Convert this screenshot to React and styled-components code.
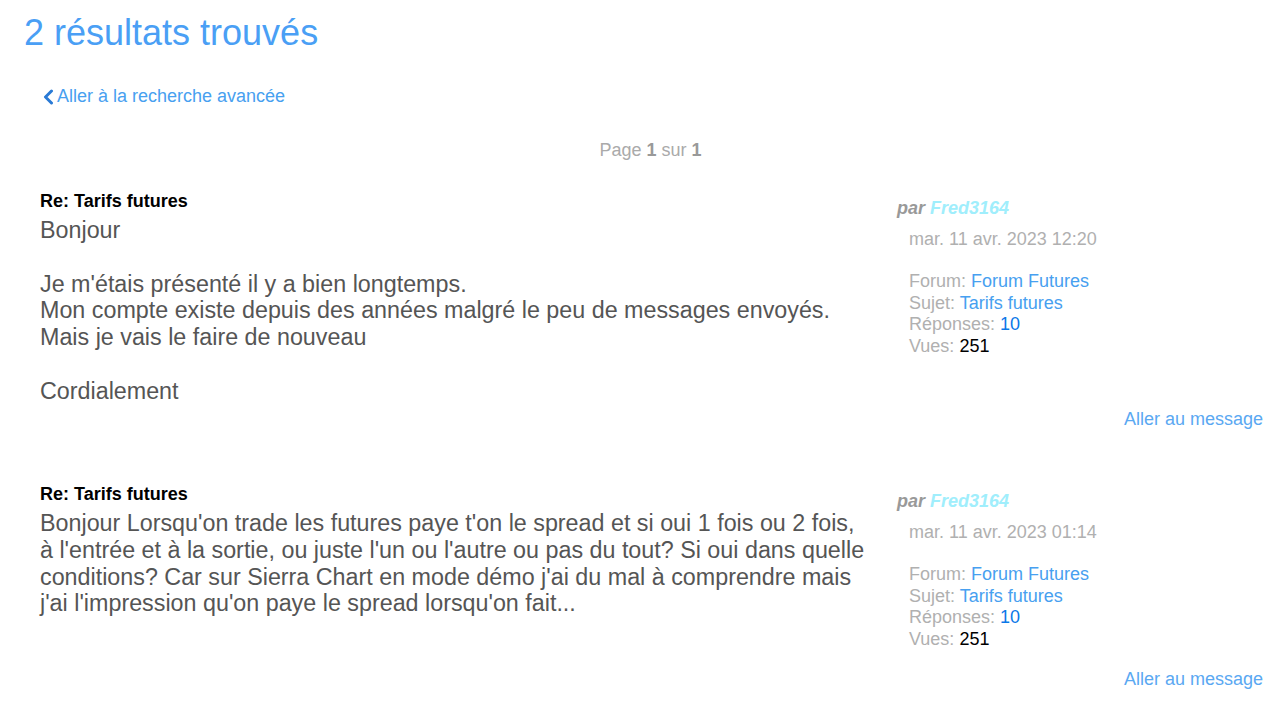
import React from 'react';
import styled, { createGlobalStyle } from 'styled-components';

const GlobalStyle = createGlobalStyle`
  body {
    margin: 0;
    background: #ffffff;
    font-family: "Liberation Sans", Arial, sans-serif;
    font-size: 18px;
  }
`;

const results = [
  {
    id: 1,
    title: 'Re: Tarifs futures',
    body: [
      'Bonjour',
      '',
      "Je m'étais présenté il y a bien longtemps.",
      'Mon compte existe depuis des années malgré le peu de messages envoyés.',
      'Mais je vais le faire de nouveau',
      '',
      'Cordialement',
    ],
    author: 'Fred3164',
    date: 'mar. 11 avr. 2023 12:20',
    forum: 'Forum Futures',
    topic: 'Tarifs futures',
    replies: 10,
    views: 251,
  },
  {
    id: 2,
    title: 'Re: Tarifs futures',
    body: [
      "Bonjour Lorsqu'on trade les futures paye t'on le spread et si oui 1 fois ou 2 fois, à l'entrée et à la sortie, ou juste l'un ou l'autre ou pas du tout? Si oui dans quelle conditions? Car sur Sierra Chart en mode démo j'ai du mal à comprendre mais j'ai l'impression qu'on paye le spread lorsqu'on fait...",
    ],
    author: 'Fred3164',
    date: 'mar. 11 avr. 2023 01:14',
    forum: 'Forum Futures',
    topic: 'Tarifs futures',
    replies: 10,
    views: 251,
  },
];

const App = () => (
  <Page>
    <GlobalStyle />
    <Title>2 résultats trouvés</Title>
    <BackLink href="#">
      <Chevron viewBox="0 0 12 16" aria-hidden="true">
        <path d="M9.5 2 L3.5 8 L9.5 14" />
      </Chevron>
      Aller à la recherche avancée
    </BackLink>
    <Pagination>
      Page <strong>1</strong> sur <strong>1</strong>
    </Pagination>
    {results.map((post) => (
      <Post key={post.id}>
        <PostRow>
          <PostMain>
            <PostTitle>{post.title}</PostTitle>
            <PostBody>
              {post.body.map((line, i) => (
                <BodyLine key={i}>{line || '\u00a0'}</BodyLine>
              ))}
            </PostBody>
          </PostMain>
          <PostMeta>
            <Author>
              par <AuthorName>{post.author}</AuthorName>
            </Author>
            <MetaList>
              <MetaLine>{post.date}</MetaLine>
              <MetaLine>{'\u00a0'}</MetaLine>
              <MetaLine>Forum: <MetaLink href="#">{post.forum}</MetaLink></MetaLine>
              <MetaLine>Sujet: <MetaLink href="#">{post.topic}</MetaLink></MetaLine>
              <MetaLine>Réponses: <Replies>{post.replies}</Replies></MetaLine>
              <MetaLine>Vues: <Views>{post.views}</Views></MetaLine>
            </MetaList>
          </PostMeta>
        </PostRow>
        <PostFooter>
          <JumpLink href="#">Aller au message</JumpLink>
        </PostFooter>
      </Post>
    ))}
  </Page>
);

const Page = styled('div')`
  padding: 13px 15px 0 24px;
`;

const Title = styled('h1')`
  margin: 0;
  font-size: 36px;
  font-weight: normal;
  line-height: 40px;
  color: #4a9ff5;
`;

const BackLink = styled('a')`
  display: inline-flex;
  align-items: center;
  gap: 3px;
  margin: 33px 0 0 18px;
  line-height: 21px;
  color: #47a0f0;
  text-decoration: none;
`;

const Chevron = styled('svg')`
  width: 12px;
  height: 16px;
  fill: none;
  stroke: #2a7ad5;
  stroke-width: 3;
  stroke-linecap: round;
  stroke-linejoin: round;
`;

const Pagination = styled('div')`
  margin-top: 30px;
  padding-left: 14px;
  text-align: center;
  line-height: 21px;
  color: #aaaaaa;

  strong {
    color: #999999;
  }
`;

const Post = styled('div')`
  margin-top: 30px;
  padding-left: 16px;

  & + & {
    margin-top: 54px;
  }
`;

const PostRow = styled('div')`
  display: flex;
`;

const PostMain = styled('div')`
  width: 857px;
  flex-shrink: 0;
  padding-right: 26px;
  padding-bottom: 4px;
  box-sizing: border-box;
`;

const PostTitle = styled('div')`
  font-weight: bold;
  line-height: 20px;
  color: #000000;
  margin-bottom: 6.5px;
`;

const PostBody = styled('div')`
  font-size: 23.3px;
  line-height: 26.8px;
  color: #555555;
`;

const BodyLine = styled('div')``;

const PostMeta = styled('div')`
  flex: 1;
  padding-top: 7px;
  padding-bottom: 19px;
`;

const Author = styled('div')`
  font-weight: bold;
  font-style: italic;
  line-height: 21px;
  color: #999999;
  margin-bottom: 10px;
`;

const AuthorName = styled('span')`
  color: #a0eefc;
`;

const MetaList = styled('div')`
  padding-left: 12px;
  color: #b0b0b0;
`;

const MetaLine = styled('div')`
  line-height: 21.4px;
`;

const MetaLink = styled('a')`
  color: #47a0f0;
  text-decoration: none;
`;

const Replies = styled('span')`
  color: #0a78e8;
`;

const Views = styled('span')`
  color: #000000;
`;

const PostFooter = styled('div')`
  text-align: right;
  line-height: 21px;
`;

const JumpLink = styled('a')`
  color: #5aa8f2;
  text-decoration: none;
`;

export default App;
